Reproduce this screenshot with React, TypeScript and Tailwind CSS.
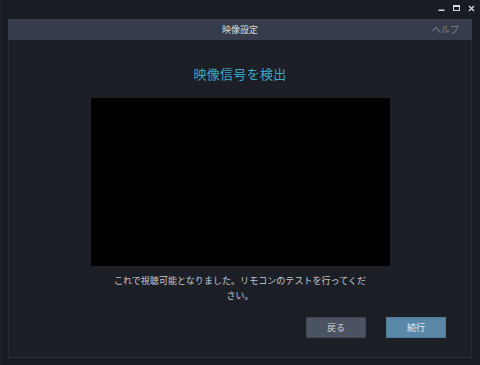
import React from "react";

export default function App() {
  const font = { fontFamily: '"Noto Sans CJK JP", "Noto Sans", sans-serif' };
  return (
    <div
      className="w-[480px] h-[365px] bg-[#191c22] shadow-[inset_1px_0_0_#20242b] flex flex-col overflow-hidden"
      style={font}
    >
      {/* title bar */}
      <div className="h-[19px] flex items-start justify-end pr-[5px] pt-[5px] gap-[8px]">
        <svg width="7" height="7" viewBox="0 0 7 7">
          <rect x="0.5" y="4.5" width="6" height="1.5" fill="#d8d8d8" />
        </svg>
        <svg width="7" height="7" viewBox="0 0 7 7">
          <rect x="0.5" y="0.5" width="6" height="5" fill="none" stroke="#d8d8d8" strokeWidth="1" />
          <rect x="0.5" y="0.5" width="6" height="1.5" fill="#d8d8d8" />
        </svg>
        <svg width="7" height="7" viewBox="0 0 7 7">
          <path d="M1 1 L6 6 M6 1 L1 6" stroke="#d8d8d8" strokeWidth="1.3" />
        </svg>
      </div>

      {/* panel */}
      <div className="mx-[8px] w-[464px] h-[339px] border border-t-0 border-[#282c34] bg-[#1c1f26] flex flex-col">
        <div className="h-[21px] -mx-px bg-[#363c4a] relative flex items-center justify-center">
          <span className="text-[9px] leading-none text-[#d6d8dc]">映像設定</span>
          <span className="absolute right-[13px] top-[6px] text-[9px] leading-none text-[#7c8290]">
            ヘルプ
          </span>
        </div>

        <div className="mt-[25px] text-center text-[13px] leading-[18px] text-[#3ea6c6] tracking-[0.3px]">
          映像信号を検出
        </div>

        <div className="mt-[15px] mx-auto w-[299px] h-[168px] bg-black"></div>

        <div className="mt-[8px] mx-auto w-[258px] text-center text-[9px] leading-[14.5px] text-[#c6c8cc] tracking-[0.05px]">
          これで視聴可能となりました。リモコンのテストを行ってください。
        </div>

        <div className="mt-[14px] flex justify-end gap-[20px] pr-[25px]">
          <button className="w-[60px] h-[21px] bg-[#4b5260] border border-[#404653] text-[9px] text-[#d0d3d8] flex items-center justify-center">
            戻る
          </button>
          <button className="w-[60px] h-[21px] bg-[#5988a6] border border-[#4f7c99] text-[9px] text-[#e2ecf2] flex items-center justify-center">
            続行
          </button>
        </div>
      </div>
    </div>
  );
}
